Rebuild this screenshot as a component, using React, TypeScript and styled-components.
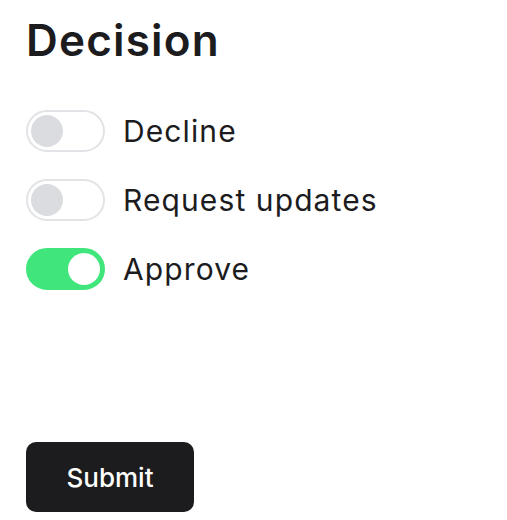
import * as React from 'react';
import styled, { createGlobalStyle } from 'styled-components';

const GlobalStyle = createGlobalStyle`
  html, body {
    margin: 0;
    padding: 0;
    background: #ffffff;
  }
  body {
    font-family: Inter, "Noto Sans", sans-serif;
    color: #1c1c1e;
  }
`;

const Page = styled.div`
  display: flex;
  flex-direction: column;
  align-items: flex-start;
  padding: 12px 26px 0;
  height: 520px;
  box-sizing: border-box;
`;

const Title = styled.h1`
  margin: 0;
  font-size: 44px;
  font-weight: 600;
  line-height: 56px;
  letter-spacing: 1.2px;
`;

const Options = styled.div`
  display: flex;
  flex-direction: column;
  gap: 27px;
  margin-top: 42px;
`;

const Row = styled.label`
  display: flex;
  align-items: center;
  gap: 18px;
  cursor: pointer;
`;

const Track = styled.span<{ $on: boolean }>`
  position: relative;
  display: inline-block;
  width: 79px;
  height: 42px;
  border-radius: 21px;
  box-sizing: border-box;
  border: 2px solid ${(p) => (p.$on ? '#40e67c' : '#e2e3e6')};
  background: ${(p) => (p.$on ? '#40e67c' : '#ffffff')};
`;

const Knob = styled.span<{ $on: boolean }>`
  position: absolute;
  top: 3px;
  left: ${(p) => (p.$on ? '40px' : '3px')};
  width: 32px;
  height: 32px;
  border-radius: 50%;
  background: ${(p) => (p.$on ? '#ffffff' : '#dadce0')};
`;

const Label = styled.span`
  font-size: 30px;
  font-weight: 400;
  line-height: 42px;
  letter-spacing: 1.1px;
`;

const SubmitButton = styled.button`
  margin-top: auto;
  margin-bottom: 8px;
  width: 168px;
  height: 70px;
  border: none;
  border-radius: 10px;
  background: #1c1c1e;
  color: #ffffff;
  font-family: Inter, "Noto Sans", sans-serif;
  font-size: 26px;
  font-weight: 500;
  cursor: pointer;
`;

const OPTIONS = [
  { id: 'decline', label: 'Decline' },
  { id: 'updates', label: 'Request updates' },
  { id: 'approve', label: 'Approve' },
];

const Toggle = ({ on }: { on: boolean }) => (
  <Track $on={on}>
    <Knob $on={on} />
  </Track>
);

const App = () => {
  const [selected, setSelected] = React.useState('approve');
  return (
    <Page>
      <GlobalStyle />
      <Title>Decision</Title>
      <Options>
        {OPTIONS.map((option) => (
          <Row key={option.id} onClick={() => setSelected(option.id)}>
            <Toggle on={selected === option.id} />
            <Label>{option.label}</Label>
          </Row>
        ))}
      </Options>
      <SubmitButton type="button">Submit</SubmitButton>
    </Page>
  );
};

export default App;
